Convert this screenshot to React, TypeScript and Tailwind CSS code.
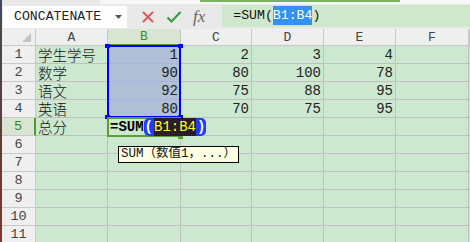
import React from "react";

const mono = "font-[family-name:'Liberation_Mono','Noto_Sans_CJK_SC',monospace]";
const cjk = "font-[family-name:'Noto_Sans_CJK_SC',sans-serif]";

const colWidths = ["w-[34px]", "w-[72px]", "w-[73px]", "w-[71px]", "w-[72px]", "w-[72px]", "w-[73px]", "flex-1"];
const colNames = ["", "A", "B", "C", "D", "E", "F", ""];

type Row = { label?: string; nums: (number | null)[] };

const rows: Row[] = [
  { label: "学生学号", nums: [1, 2, 3, 4] },
  { label: "数学", nums: [90, 80, 100, 78] },
  { label: "语文", nums: [92, 75, 88, 95] },
  { label: "英语", nums: [80, 70, 75, 95] },
  { label: "总分", nums: [null, null, null, null] },
  ...Array.from({ length: 6 }, () => ({ nums: [null, null, null, null] })),
];

function FormulaBar() {
  return (
    <div className="h-[30px] bg-[#e9e9e9] flex flex-col">
      <div className="h-[4px] flex">
        <div className="w-[98px]" />
        <div className="flex-1 bg-[#f7f7f7]">
          <div className="ml-[100px] w-[200px] h-[2px] bg-[#7ab062]" />
        </div>
      </div>
      <div className="flex items-start">
        <div className="ml-[1px] mt-[2px] w-[124px] h-[22px] bg-white flex items-center justify-between pl-[11px] pr-[5px]">
          <span className={`${mono} text-[13.2px] text-[#222]`}>CONCATENATE</span>
          <svg width="7" height="4" viewBox="0 0 7 4"><path d="M0 0h7L3.5 4z" fill="#555" /></svg>
        </div>
        <div className="flex items-center h-[25px] ml-[14px] gap-[11px]">
          <svg width="14" height="14" viewBox="0 0 14 14">
            <path d="M2 2l10 10M12 2L2 12" stroke="#e0575a" strokeWidth="2" />
          </svg>
          <svg width="16" height="14" viewBox="0 0 16 14">
            <path d="M1.5 7.5l4 4L14.5 2" stroke="#3a9a3e" strokeWidth="2.2" fill="none" />
          </svg>
          <span className="font-[family-name:'Liberation_Serif',serif] italic text-[17px] text-[#666] leading-none">fx</span>
        </div>
        <div className="ml-[17px] mt-[1px] flex-1 h-[22px] bg-[#cfe8cd] flex items-center pl-[11px]">
          <span className={`${mono} text-[13.2px] text-[#111] whitespace-pre`}>
            =SUM(<span className="bg-[#3391f0] text-white py-[2px]">B1:B4</span>)
          </span>
        </div>
      </div>
    </div>
  );
}

function HeaderRow() {
  return (
    <div className="flex h-[17px]">
      {colNames.map((n, i) => {
        const active = n === "B";
        return (
          <div
            key={i}
            className={`${colWidths[i]} shrink-0 relative flex items-center justify-center border-r border-b ${
              active ? "bg-[#d7e5d2] border-b-[2px] border-b-[#4f9a2e] border-r-[#c8c8c8] text-[#3c8a1e]" : "bg-[#efefef] border-[#c9c9c9] text-[#444]"
            } ${mono} text-[13px] leading-none`}
          >
            {i === 0 ? (
              <svg className="absolute right-[4px] bottom-[3px]" width="9" height="9" viewBox="0 0 9 9">
                <path d="M9 0v9H0z" fill="#c4c4c4" />
              </svg>
            ) : (
              n
            )}
          </div>
        );
      })}
    </div>
  );
}

function GridRow({ row, idx }: { row: Row; idx: number }) {
  const r = idx + 1;
  const activeRow = r === 5;
  const inSel = r >= 1 && r <= 4;
  return (
    <div className="flex h-[18px]">
      <div
        className={`${colWidths[0]} shrink-0 flex items-center justify-center border-b ${mono} text-[13.5px] leading-none ${
          activeRow
            ? "bg-[#d7e5d2] text-[#3c8a1e] border-r-[2px] border-r-[#4f9a2e] border-b-[#c9c9c9]"
            : "bg-[#efefef] text-[#444] border-r border-[#c9c9c9]"
        }`}
      >
        {r}
      </div>
      <div className={`${colWidths[1]} shrink-0 border-r border-b border-[#c0c0c0] flex items-center pl-[2px] ${cjk} font-light text-[14.5px] leading-[17px] text-[#111] whitespace-nowrap`}>
        {row.label}
      </div>
      {row.nums.map((v, j) => (
        <div
          key={j}
          className={`${colWidths[j + 2]} shrink-0 border-r border-b flex items-center justify-end pr-[2px] ${mono} text-[14px] leading-none text-[#222] ${
            j === 0 && inSel ? "bg-[#aebfd6] border-b-[#b0b0e2] border-r-[#c0c0c0]" : "border-[#c0c0c0]"
          }`}
        >
          {v}
        </div>
      ))}
      <div className={`${colWidths[6]} shrink-0 border-r border-b border-[#c0c0c0]`} />
      <div className="flex-1 border-b border-[#c0c0c0]" />
    </div>
  );
}

export default function App() {
  return (
    <div className="w-[470px] h-[242px] overflow-hidden flex bg-[#cce8cf]">
      <div className="w-[2px] shrink-0 bg-gradient-to-b from-[#3e4b5a] via-[#5b3f3a] to-[#7a3a2c]" />
      <div className="flex-1 flex flex-col">
        <FormulaBar />
        <div className="relative">
          <HeaderRow />
          {rows.map((row, i) => (
            <GridRow key={i} row={row} idx={i} />
          ))}

          {/* selection B1:B4 */}
          <div className="absolute left-[105px] top-[16px] w-[74px] h-[73px] border-2 border-[#0000ff] pointer-events-none" />
          {[
            "left-[103px] top-[15px]",
            "left-[176px] top-[15px]",
            "left-[103px] top-[86px]",
            "left-[176px] top-[86px]",
          ].map((c) => (
            <div key={c} className={`absolute ${c} w-[5px] h-[4px] bg-[#0000ff]`} />
          ))}

          {/* active cell B5 */}
          <div className="absolute left-[105px] top-[88px] w-[74px] h-[20px] border-2 border-[#5a9e3a]" />
          <div className="absolute left-[176px] top-[105px] w-[5px] h-[5px] bg-[#5a9e3a]" />
          <div className={`absolute left-[108px] top-[89px] h-[18px] flex items-center ${mono} text-[14px] font-bold leading-none text-black whitespace-pre`}>
            =SUM
            <span className="bg-[#1f3cff] text-white rounded-l-[5px] px-[1px] py-[2px]">(</span>
            <span className="bg-[#2a1c2c] text-[#ffff2a] font-normal py-[2px]">B1:B4</span>
            <span className="bg-[#1f3cff] text-white rounded-r-[5px] px-[1px] py-[2px]">)</span>
          </div>

          {/* tooltip */}
          <div className={`absolute left-[116px] top-[117px] h-[17px] px-[2px] bg-[#ffffe1] border border-black flex items-center ${mono} text-[12.5px] leading-none text-[#111] whitespace-pre`}>
            SUM（数值1，...）
          </div>
        </div>
      </div>
    </div>
  );
}
